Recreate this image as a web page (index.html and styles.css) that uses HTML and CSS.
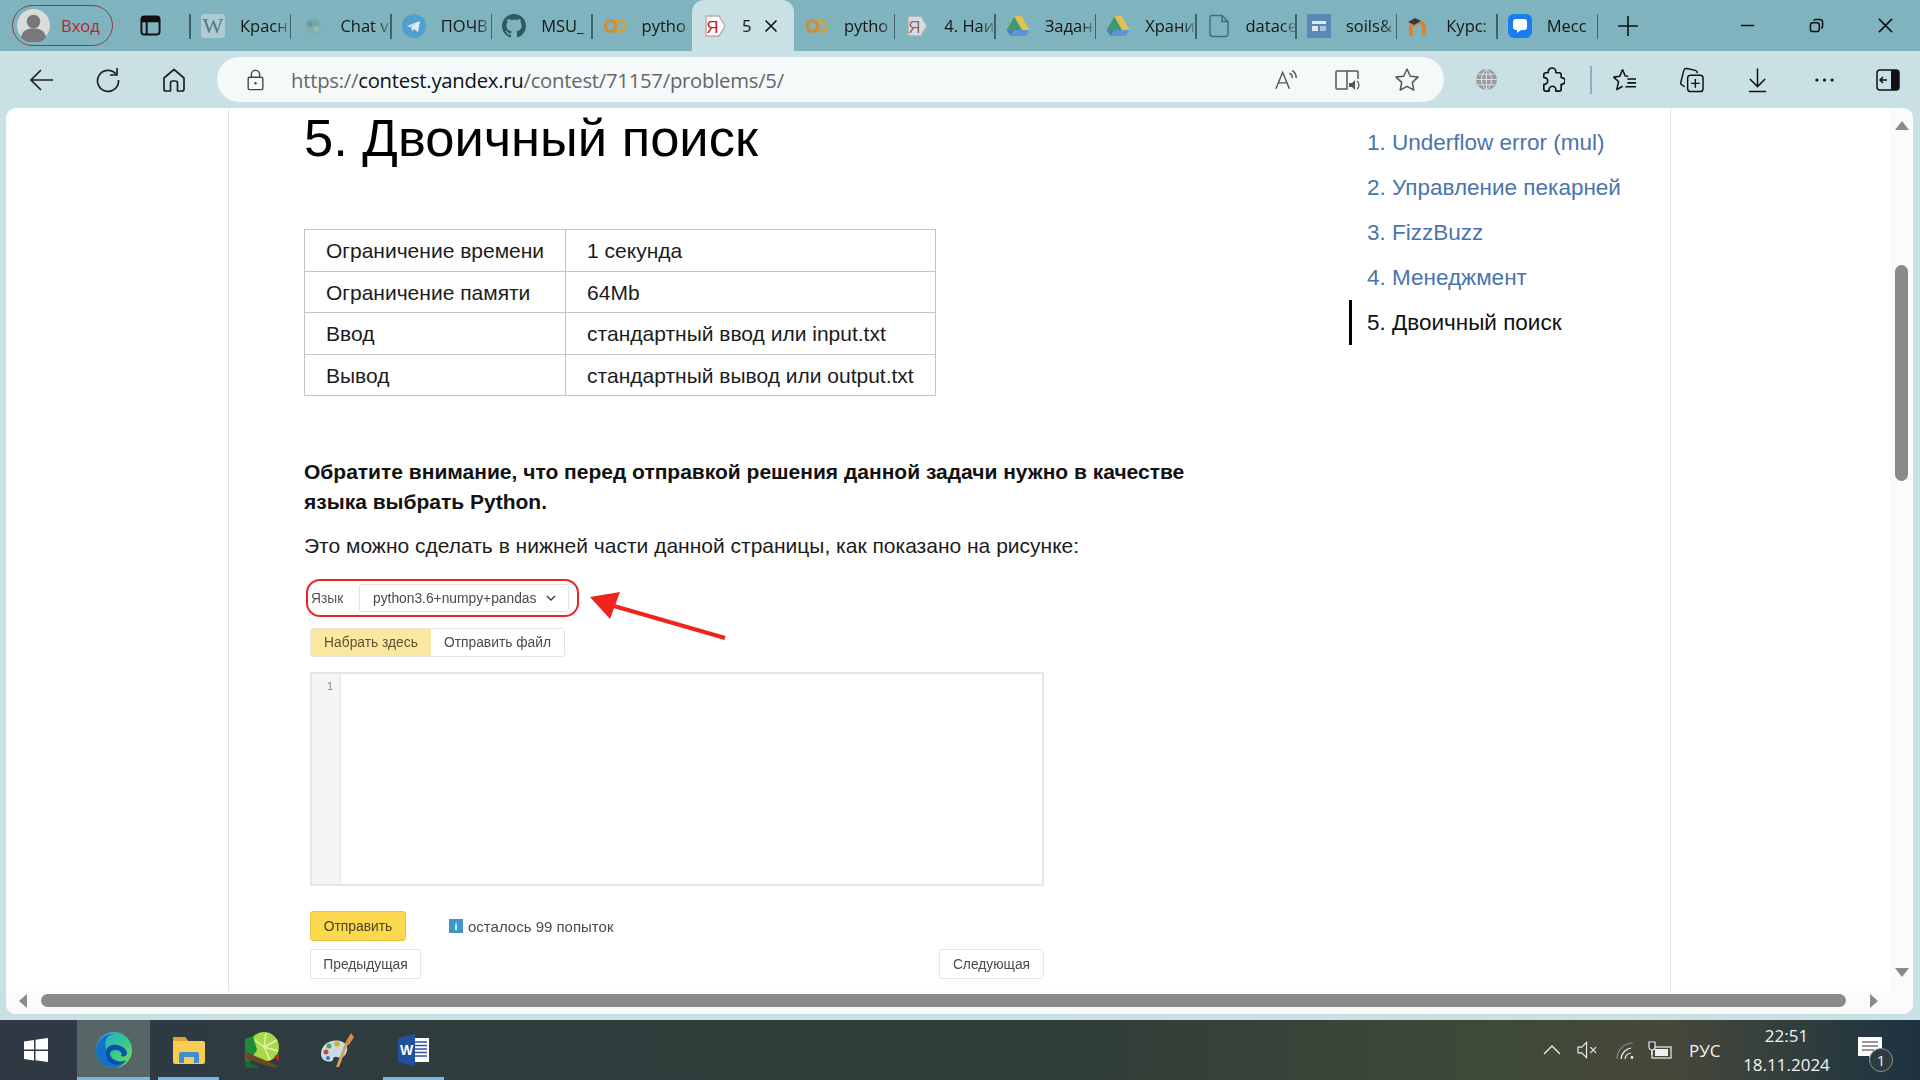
FILE: index.html
```html
<!DOCTYPE html>
<html lang="ru">
<head>
<meta charset="utf-8">
<title>5. Двоичный поиск</title>
<link rel="stylesheet" href="styles.css">
</head>
<body>
<svg class="defs" width="0" height="0" aria-hidden="true">
  <symbol id="i-ya" viewBox="0 0 24 24"><path d="M3 2h13l6 10-6 10H3z" fill="#fff" stroke="#c9a5a5" stroke-width="1.4"/><text x="9.5" y="18.5" font-family="Liberation Sans" font-size="17" text-anchor="middle" fill="#c8201c">Я</text></symbol>
  <symbol id="i-colab" viewBox="0 0 24 24"><circle cx="16.500" cy="12" r="5.300" fill="none" stroke="#c9a33f" stroke-width="3.200"/><circle cx="7.500" cy="12" r="5.300" fill="none" stroke="#c98f3a" stroke-width="3.200"/></symbol>
  <symbol id="i-drive" viewBox="0 0 24 24"><path d="M8.500 2h7l8 14h-7z" fill="#e5c04a"/><path d="M8.500 2l7.300 13H.8z" fill="#3f9a6a" transform="translate(-.2 1)"/><path d="M4.500 22l3.700-6h15.300l-3.600 6z" fill="#5a94d8"/><path d="M.5 16h7.700l-3.700 6z" fill="#4b7fb8"/></symbol>
</svg>

<header class="tabbar">
  <div class="profile">
    <svg class="avatar" viewBox="0 0 34 34"><circle cx="17" cy="17" r="17" fill="#d9dcdc"/><circle cx="17" cy="13" r="7" fill="#787878"/><path d="M4 29c2-8 8-9 13-9s11 1 13 9a17 17 0 0 1-26 0z" fill="#787878"/></svg>
    <span class="profile-name">Вход</span>
  </div>
  <svg class="tabview" viewBox="0 0 22 22"><rect x="1.500" y="1.500" width="19" height="19" rx="3" fill="none" stroke="#111" stroke-width="2"/><path d="M1.500 4.500a3 3 0 0 1 3-3h13a3 3 0 0 1 3 3v3h-19z" fill="#111"/><path d="M7 7v13" stroke="#111" stroke-width="2"/></svg>
  <div class="tabs">
    <div class="tab first"><span class="fav fav-w">W</span><span class="tab-title">Красн</span></div>
    <div class="tab"><svg class="fav dim" viewBox="0 0 24 24"><circle cx="12" cy="12" r="8" fill="#7fa9a0"/><circle cx="9" cy="10" r="3" fill="#5d8c80"/><circle cx="15" cy="15" r="3" fill="#98b9ad"/><path d="M15 5l3 6-5 1z" fill="#6c9a8e"/></svg><span class="tab-title">Chat v</span></div>
    <div class="tab"><svg class="fav" viewBox="0 0 24 24"><circle cx="12" cy="12" r="12" fill="#4f9fcf"/><path d="M5 12l13-5-2 11-4-3-2 2-1-4 6-4-7 4z" fill="#dcebf2"/></svg><span class="tab-title">ПОЧВ</span></div>
    <div class="tab"><svg class="fav" viewBox="0 0 16 16"><path fill="#2f5a62" d="M8 0C3.580 0 0 3.580 0 8c0 3.540 2.290 6.530 5.470 7.590.4.070.55-.17.55-.38 0-.19-.01-.82-.01-1.490-2.010.370-2.530-.490-2.690-.940-.090-.230-.480-.940-.820-1.130-.280-.150-.680-.520-.010-.530.630-.010 1.080.580 1.230.820.720 1.210 1.870.870 2.330.660.070-.520.280-.870.510-1.070-1.780-.200-3.640-.890-3.640-3.950 0-.870.310-1.590.820-2.150-.080-.200-.360-1.020.080-2.120 0 0 .670-.210 2.200.820.640-.180 1.320-.270 2-.270s1.360.090 2 .270c1.530-1.040 2.200-.820 2.200-.820.440 1.100.160 1.920.080 2.120.510.560.820 1.270.820 2.150 0 3.070-1.870 3.750-3.650 3.950.290.250.540.730.540 1.480 0 1.070-.010 1.930-.010 2.200 0 .210.150.460.550.380A8.010 8.010 0 0 0 16 8c0-4.420-3.580-8-8-8z"/></svg><span class="tab-title">MSU_</span></div>
    <div class="tab nosep"><svg class="fav"><use href="#i-colab"/></svg><span class="tab-title">pytho</span></div>
    <div class="tab active"><svg class="fav"><use href="#i-ya"/></svg><span class="tab-active-title">5</span><svg class="tab-close" viewBox="0 0 14 14"><path d="M1.500 1.500l11 11M12.500 1.500l-11 11" stroke="#111" stroke-width="1.600"/></svg></div>
    <div class="tab"><svg class="fav"><use href="#i-colab"/></svg><span class="tab-title">pytho</span></div>
    <div class="tab"><svg class="fav dim"><use href="#i-ya"/></svg><span class="tab-title">4. Наи</span></div>
    <div class="tab"><svg class="fav"><use href="#i-drive"/></svg><span class="tab-title">Задан</span></div>
    <div class="tab"><svg class="fav"><use href="#i-drive"/></svg><span class="tab-title">Храни</span></div>
    <div class="tab"><svg class="fav" viewBox="0 0 24 24"><path d="M4 1.500h11l6 6V20a2.500 2.500 0 0 1-2.500 2.500h-13A2.500 2.500 0 0 1 3 20V3z" fill="none" stroke="#3f6c75" stroke-width="1.400"/><path d="M15 1.500v6h6" fill="none" stroke="#3f6c75" stroke-width="1.400"/></svg><span class="tab-title">datace</span></div>
    <div class="tab"><svg class="fav" viewBox="0 0 24 24"><rect width="24" height="24" fill="#5b88b8"/><rect x="5" y="7" width="14" height="3" fill="#dfe9ee"/><rect x="5" y="12" width="6" height="5" fill="#dfe9ee"/><rect x="13" y="12" width="6" height="5" fill="#aac3d6"/></svg><span class="tab-title">soils&amp;</span></div>
    <div class="tab"><svg class="fav" viewBox="0 0 24 24"><path d="M9 22v-9a3 3 0 0 1 6 0v9h4V12a6 6 0 0 0-10-4 5 5 0 0 0-7 4v10h4V13a2 2 0 0 1 3 0z" fill="#d98334"/><path d="M1 8l7-4 6 3-7 4z" fill="#3a3a3a"/></svg><span class="tab-title">Курс:</span></div>
    <div class="tab"><svg class="fav" viewBox="0 0 24 24"><rect width="24" height="24" rx="6" fill="#1a7cf0"/><path d="M5 8a3 3 0 0 1 3-3h8a3 3 0 0 1 3 3v5a3 3 0 0 1-3 3h-3l-4 3v-3H8a3 3 0 0 1-3-3z" fill="#fff"/></svg><span class="tab-title">Месс</span></div>
  </div>
  <svg class="newtab" viewBox="0 0 20 20"><path d="M10 0v20M0 10h20" stroke="#111" stroke-width="1.600"/></svg>
  <div class="winctl">
    <svg viewBox="0 0 16 16"><path d="M1 8h14" stroke="#111" stroke-width="1.600"/></svg>
    <svg viewBox="0 0 16 16"><rect x="1.500" y="5" width="9.500" height="9.500" rx="2.500" fill="none" stroke="#111" stroke-width="1.600"/><path d="M5 3a2.500 2.500 0 0 1 2.500-1.500h4A3 3 0 0 1 14.500 4.500v4A2.500 2.500 0 0 1 13 11" fill="none" stroke="#111" stroke-width="1.600"/></svg>
    <svg viewBox="0 0 16 16"><path d="M1 1l14 14M15 1L1 15" stroke="#111" stroke-width="1.700"/></svg>
  </div>
</header>

<nav class="toolbar">
  <div class="nav-btns">
    <svg class="tb" viewBox="0 0 26 26"><path d="M24 13H2M12 3L2 13l10 10" fill="none" stroke="#222" stroke-width="1.700"/></svg>
    <svg class="tb" viewBox="0 0 26 26"><path d="M21 7a10.500 10.500 0 1 0 2.500 6" fill="none" stroke="#222" stroke-width="1.700"/><path d="M22 1v7h-7" fill="none" stroke="#222" stroke-width="1.700"/></svg>
    <svg class="tb" viewBox="0 0 26 26"><path d="M13 2.500L3 11v11a2 2 0 0 0 2 2h4.500v-8a2 2 0 0 1 2-2h3a2 2 0 0 1 2 2v8H21a2 2 0 0 0 2-2V11z" fill="none" stroke="#222" stroke-width="1.700" stroke-linejoin="round"/></svg>
  </div>
  <div class="address">
    <svg class="lock" viewBox="0 0 18 24"><path d="M4.500 9V6a4.500 4.500 0 0 1 9 0v3" fill="none" stroke="#444" stroke-width="1.500"/><rect x="1" y="9" width="16" height="13.500" rx="1.500" fill="none" stroke="#444" stroke-width="1.500"/><circle cx="9" cy="15.500" r="1.300" fill="#444"/></svg>
    <span class="url"><span class="url-dim">https://</span>contest.yandex.ru<span class="url-dim">/contest/71157/problems/5/</span></span>
    <div class="addr-icons">
      <svg class="read" viewBox="0 0 26 24"><path d="M2 21L9 4l7 17M4.500 15h9" fill="none" stroke="#555" stroke-width="1.500"/><path d="M16 5a5 5 0 0 1 3 5M19 2a9 9 0 0 1 4 8" fill="none" stroke="#555" stroke-width="1.500"/></svg>
      <svg class="imm" viewBox="0 0 26 24"><path d="M13 3H3a1 1 0 0 0-1 1v16a1 1 0 0 0 1 1h10zM13 3h10a1 1 0 0 1 1 1v7" fill="none" stroke="#555" stroke-width="1.500"/><path d="M15 15h3l3-3v10l-3-3h-3z" fill="#555"/><path d="M23 13a5 5 0 0 1 0 8" fill="none" stroke="#555" stroke-width="1.200"/></svg>
      <svg class="star" viewBox="0 0 26 26"><path d="M13 2l3.300 7.200 7.700.9-5.700 5.300 1.500 7.800L13 19.300l-6.800 3.900 1.500-7.800L2 10.100l7.700-.9z" fill="none" stroke="#555" stroke-width="1.500" stroke-linejoin="round"/></svg>
    </div>
  </div>
  <div class="tools">
    <svg class="t-globe" viewBox="0 0 24 24"><circle cx="12" cy="12" r="11" fill="#9c9c9c"/><path d="M1 12h22M3 6.500h18M3 17.500h18M12 1v22M12 1c-7 6-7 16 0 22M12 1c7 6 7 16 0 22" fill="none" stroke="#d5e5e8" stroke-width="1"/></svg>
    <svg class="t-puz" viewBox="0 0 26 27"><path d="M8.500 6V5a4 4 0 0 1 8 0v1H20a2 2 0 0 1 2 2v3h.5a3.500 3.500 0 0 1 0 7H22v5a2 2 0 0 1-2 2h-3.500v-1.500a3.500 3.500 0 0 0-7 0V25H6a2 2 0 0 1-2-2v-5h.5a3.500 3.500 0 0 0 0-7H4V8a2 2 0 0 1 2-2z" fill="none" stroke="#111" stroke-width="1.700" stroke-linejoin="round"/></svg>
    <span class="t-sep"></span>
    <svg class="t-fav" viewBox="0 0 26 26"><path d="M11 2l2.700 6.800 3.300.2M1.500 10l6.500-.8L11 2M1.500 10l5.300 4.600L5 23l6-3.500" fill="none" stroke="#111" stroke-width="1.600" stroke-linejoin="round"/><path d="M16 12h9M16 16h9M14 20h11" stroke="#111" stroke-width="1.600"/></svg>
    <svg class="t-col" viewBox="0 0 26 28"><path d="M6 21l-3-2a2 2 0 0 1-1-3L5 4a3 3 0 0 1 3-2l9 2a3 3 0 0 1 2 3" fill="none" stroke="#111" stroke-width="1.500"/><rect x="9" y="9" width="16" height="17" rx="3" fill="none" stroke="#111" stroke-width="1.500"/><path d="M17 13v9M12.500 17.500h9" stroke="#111" stroke-width="1.500"/></svg>
    <svg class="t-dl" viewBox="0 0 20 26"><path d="M10 1v19M2 12l8 8 8-8M1 25h18" fill="none" stroke="#111" stroke-width="1.600"/></svg>
    <svg class="t-dots" viewBox="0 0 20 4"><circle cx="2" cy="2" r="1.700" fill="#111"/><circle cx="10" cy="2" r="1.700" fill="#111"/><circle cx="18" cy="2" r="1.700" fill="#111"/></svg>
    <svg class="t-side" viewBox="0 0 24 22"><rect x="1" y="1" width="22" height="20" rx="3" fill="none" stroke="#111" stroke-width="1.500"/><path d="M15 1h5a3 3 0 0 1 3 3v14a3 3 0 0 1-3 3h-5z" fill="#111"/><path d="M11 11H4M7 8l-3 3 3 3" fill="none" stroke="#111" stroke-width="1.500"/></svg>
  </div>
</nav>

<div class="viewport">
  <div class="page">
    <div class="content">
      <div class="sheet">
        <main class="problem">
          <h1>5. Двоичный поиск</h1>
          <table class="limits">
            <tr><td class="c1">Ограничение времени</td><td>1 секунда</td></tr>
            <tr><td class="c1">Ограничение памяти</td><td>64Mb</td></tr>
            <tr><td class="c1">Ввод</td><td>стандартный ввод или input.txt</td></tr>
            <tr><td class="c1">Вывод</td><td>стандартный вывод или output.txt</td></tr>
          </table>
          <p class="note">Обратите внимание, что перед отправкой решения данной задачи нужно в качестве<br>языка выбрать Python.</p>
          <p class="hint">Это можно сделать в нижней части данной страницы, как показано на рисунке:</p>
          <figure class="shot">
            <div class="lang-row">
              <span class="lang-label">Язык</span>
              <div class="select"><span>python3.6+numpy+pandas</span><svg viewBox="0 0 10 6"><path d="M1 1l4 4 4-4" fill="none" stroke="#333" stroke-width="1.300"/></svg></div>
            </div>
            <svg class="arrow" viewBox="0 0 140 50"><path d="M135 46L24 14" stroke="#f0241c" stroke-width="4" fill="none"/><path d="M0 5l30-5-10 27z" fill="#f0241c"/></svg>
            <div class="seg"><span class="seg-on">Набрать здесь</span><span class="seg-off">Отправить файл</span></div>
            <div class="editor"><div class="gutter">1</div></div>
            <div class="send-row">
              <span class="btn-send">Отправить</span>
              <span class="info"><i class="info-icon">i</i>осталось 99 попыток</span>
            </div>
            <div class="pager"><span class="btn-page prev">Предыдущая</span><span class="btn-page next">Следующая</span></div>
          </figure>
        </main>
        <aside class="side">
          <a class="side-item">1. Underflow error (mul)</a>
          <a class="side-item">2. Управление пекарней</a>
          <a class="side-item">3. FizzBuzz</a>
          <a class="side-item">4. Менеджмент</a>
          <a class="side-item current">5. Двоичный поиск</a>
        </aside>
      </div>
    </div>
    <div class="vscroll">
      <span class="tri tri-up"></span>
      <span class="vtrack"><span class="vthumb"></span></span>
      <span class="tri tri-down"></span>
    </div>
    <div class="hscroll">
      <span class="tri tri-left"></span>
      <span class="hthumb"></span>
      <span class="tri tri-right"></span>
    </div>
  </div>
</div>

<footer class="taskbar">
  <div class="tb-apps">
    <div class="app start"><svg viewBox="0 0 24 24"><path d="M0 3.500l10-1.500v9.500H0zM11.500 1.800L24 0v11.500H11.500zM0 13h10v9.500L0 21zM11.500 13H24v11l-12.500-1.800z" fill="#fff"/></svg></div>
    <div class="app edge running focus"><svg viewBox="0 0 36 36"><defs><linearGradient id="eg" x1="0" y1="0" x2="1" y2="1"><stop offset="0" stop-color="#2aa8e0"/><stop offset=".55" stop-color="#36c98c"/><stop offset="1" stop-color="#7fdc5a"/></linearGradient></defs><circle cx="18" cy="18" r="18" fill="url(#eg)"/><path d="M0 18C1 8 9 1 18 2c-8 1-10 8-8 15 2 9 11 14 20 12-3 4-8 7-12 7C8 36 0 28 0 18z" fill="#1570c8"/><path d="M10 20c0-5 5-8 11-7 6 1 10 5 10 8 0 3-3 4-6 3 2-3-1-6-6-6-5 0-6 4-4 7 2 4 8 7 15 3-4 5-11 6-15 3-3-2-5-6-5-11z" fill="#0f4fa8"/></svg></div>
    <div class="app folder running"><svg viewBox="0 0 32 28"><path d="M0 3a2 2 0 0 1 2-2h10l3 4h15a2 2 0 0 1 2 2v19a2 2 0 0 1-2 2H2a2 2 0 0 1-2-2z" fill="#f7cd52"/><path d="M0 3a2 2 0 0 1 2-2h10l3 4H0z" fill="#e0a527"/><path d="M6 27v-9a2 2 0 0 1 2-2h16a2 2 0 0 1 2 2v9h-5v-6H11v6z" fill="#3f8fd0"/></svg></div>
    <div class="app lime"><svg viewBox="0 0 36 36"><circle cx="20" cy="15" r="15" fill="#a7d84a"/><path d="M20 15L8 6M20 15l2-14M20 15l13-7M20 15l14 4M20 15l6 13" stroke="#e3f3a8" stroke-width="1.500"/><path d="M1 7l8-3 4 14L1 36z" fill="#1f8a3a"/><path d="M2 20l32 14-3 2-29-9z" fill="#6a4a20"/><path d="M1 28l15 8H1z" fill="#136a2c"/><path d="M30 24l5-2v8z" fill="#b03020"/></svg></div>
    <div class="app paint"><svg viewBox="0 0 36 36"><path d="M2 22C2 12 12 7 21 9c8 2 9 9 5 14-2 3-6 3-8 2-3-1-4 1-4 3-2 3-12 2-12-6z" fill="#c9dbe6"/><circle cx="7" cy="20" r="2.500" fill="#d5443a"/><circle cx="10" cy="14" r="2.500" fill="#4ca84a"/><circle cx="18" cy="12" r="2.800" fill="#e5a53a"/><circle cx="9" cy="26" r="2" fill="#3d6fc0"/><path d="M17 35l9-24 3 1-9 23z" fill="#d9a05a"/><path d="M26 11l6-10 3 4-5 8z" fill="#d28a4c"/></svg></div>
    <div class="app word running"><svg viewBox="0 0 32 32"><rect x="13" y="4" width="18" height="24" fill="#fff"/><path d="M15 8h14M15 11.500h14M15 15h14M15 18.500h14M15 22h14" stroke="#2c55a2" stroke-width="1.300"/><path d="M0 4l17-4v32L0 28z" fill="#22509e"/><text x="8.500" y="21" font-family="Liberation Sans" font-size="14" font-weight="700" text-anchor="middle" fill="#fff">W</text></svg></div>
  </div>
  <div class="tray">
    <svg class="tr-chev" viewBox="0 0 18 10"><path d="M1 9l8-8 8 8" fill="none" stroke="#eee" stroke-width="1.300"/></svg>
    <svg class="tr-vol" viewBox="0 0 22 18"><path d="M1 6h4l5-5v16l-5-5H1z" fill="none" stroke="#eee" stroke-width="1.200"/><path d="M14 6l6 6M20 6l-6 6" stroke="#eee" stroke-width="1.200"/></svg>
    <svg class="tr-wifi" viewBox="0 0 18 18"><path d="M1 18A16 16 0 0 1 17 2" fill="none" stroke="#888" stroke-width="1.200"/><path d="M5 18A12 12 0 0 1 15 7M9 18a7 7 0 0 1 6-6" fill="none" stroke="#eee" stroke-width="1.200"/><circle cx="16" cy="16.500" r="1.400" fill="#eee"/></svg>
    <svg class="tr-bat" viewBox="0 0 24 18"><rect x="4" y="6" width="19" height="11" fill="none" stroke="#eee" stroke-width="1.200"/><rect x="7" y="8" width="13" height="7" fill="#eee"/><path d="M1 1h6v5a3 3 0 0 1-6 0zM4 9v5" fill="#2f3d38" stroke="#eee" stroke-width="1.200"/></svg>
    <span class="tr-lang">РУС</span>
    <div class="clock"><span>22:51</span><span>18.11.2024</span></div>
    <div class="notif">
      <svg viewBox="0 0 24 27"><path d="M0 0h24v19h-8l-3 6-2-6H0z" fill="#fff"/><path d="M4 5h16M4 9h16M4 13h12" stroke="#333" stroke-width="1"/></svg>
      <span class="badge">1</span>
    </div>
  </div>
</footer>
</body>
</html>
```
FILE: styles.css
```css
* { box-sizing: border-box; }
html, body { margin: 0; height: 100%; }
body {
  width: 1920px; height: 1080px; overflow: hidden;
  display: flex; flex-direction: column;
  background: #c9e0e5;
  font-family: "Liberation Sans", Arial, sans-serif;
  color: #1a1a1a;
}
.defs { position: absolute; }

/* tab strip */
.tabbar {
  flex: 0 0 51px; display: flex; align-items: center;
  background: #7fb4bf; font-family: "Open Sans", sans-serif;
}
.profile {
  margin-left: 12px; width: 101px; height: 41px;
  display: flex; align-items: center; gap: 11px; padding-left: 4px;
  border: 1.500px solid #8f3a46; border-radius: 21px;
}
.avatar { width: 33px; height: 33px; }
.profile-name { font-size: 16.500px; color: #b3282f; }
.tabview { width: 21px; height: 21px; margin-left: 27px; }
.tabs { display: flex; height: 51px; margin-left: 29px; }
.tab {
  position: relative; width: 100.400px; display: flex; align-items: center;
  padding: 0 1px 0 11px; gap: 15px;
}
.tab::after {
  content: ""; position: absolute; right: -1px; top: 14px; bottom: 12px;
  width: 1.500px; background: #3d626b;
}
.tab.first::before {
  content: ""; position: absolute; left: -1px; top: 14px; bottom: 12px;
  width: 1.500px; background: #3d626b;
}
.tab.nosep::after, .tab.active::after { display: none; }
.tab.active {
  width: 102px; background: #c9e0e5; border-radius: 12px 12px 0 0;
  gap: 15px; padding-left: 11px;
}
.fav { flex: 0 0 24px; width: 24px; height: 24px; }
.dim { opacity: .6; }
.fav-w {
  background: #a9cdd2; color: #55757c; border-radius: 3px;
  font: 22px/24px "Liberation Serif", serif; text-align: center;
}
.tab-title {
  flex: 1; min-width: 0; overflow: hidden; white-space: nowrap;
  font-size: 16.500px; color: #161616;
  -webkit-mask-image: linear-gradient(to right, #000 72%, rgba(0,0,0,.25) 100%);
  mask-image: linear-gradient(to right, #000 72%, rgba(0,0,0,.25) 100%);
}
.tab-active-title { font-size: 16.500px; color: #161616; }
.tab-close { width: 14px; height: 14px; margin-left: -2px; }
.newtab { width: 20px; height: 20px; margin-left: 21px; }
.winctl { margin-left: auto; display: flex; align-items: center; padding-right: 27px; gap: 54px; }
.winctl svg { width: 15px; height: 15px; }

/* toolbar */
.toolbar { flex: 0 0 57px; display: flex; align-items: center; padding: 6px 21px 6px 29px; background: #c9e0e5; }
.nav-btns { display: flex; gap: 40px; }
.tb { width: 26px; height: 26px; }
.address {
  margin-left: 30px; width: 1227px; height: 45px; flex: none;
  display: flex; align-items: center; padding-left: 30px;
  background: #f5f9fa; border-radius: 23px;
}
.lock { width: 17px; height: 22px; }
.url { margin-left: 27px; font: 20.300px "Open Sans", sans-serif; color: #111; letter-spacing: -.25px; }
.url-dim { color: #666; }
.addr-icons { margin-left: auto; display: flex; align-items: center; padding-right: 24px; }
.read { width: 25px; height: 24px; margin-right: 35px; }
.imm { width: 26px; height: 24px; margin-right: 34px; }
.star { width: 26px; height: 26px; }
.tools { display: flex; align-items: center; margin-left: 31px; flex: 1; }
.t-globe { width: 23px; height: 23px; }
.t-puz { width: 25px; height: 26px; margin-left: 42px; }
.t-sep { width: 1.500px; height: 28px; background: #9ab; margin-left: 25px; }
.t-fav { width: 25px; height: 26px; margin-left: 20px; }
.t-col { width: 25px; height: 28px; margin-left: 42px; }
.t-dl { width: 19px; height: 26px; margin-left: 44px; }
.t-dots { width: 19px; height: 4px; margin-left: 48px; }
.t-side { width: 24px; height: 22px; margin-left: 42px; }

/* page */
.viewport { flex: 0 0 912px; padding: 0 7px 6px 6px; }
.page {
  height: 906px; background: #fff; border-radius: 10px; overflow: hidden;
  display: grid; grid-template-columns: 1fr 23px; grid-template-rows: 1fr 23px;
}
.content { overflow: hidden; padding-left: 222px; }
.sheet {
  width: 1443px; height: 100%; display: grid; grid-template-columns: 1045px 1fr;
  padding-left: 75px; border-left: 1px solid #e4e4e4; border-right: 1px solid #e4e4e4;
}
.problem { min-width: 0; }
h1 { margin: 2px 0 63px; font-size: 52.500px; line-height: 56px; font-weight: 400; color: #000; }
.limits { border-collapse: collapse; font-size: 21px; color: #1c1c1c; }
.limits td { height: 41.500px; padding: 2px 21px 0; border: 1px solid #c4c4c4; white-space: nowrap; }
.limits .c1 { width: 261px; }
.limits td:last-child { width: 369px; }
.note { margin: 61px 0 14px; font-size: 21px; line-height: 30px; font-weight: 700; color: #111; white-space: nowrap; }
.hint { margin: 0; font-size: 21px; line-height: 30px; color: #1c1c1c; }

/* picture of the submit form */
.shot {
  position: relative; width: 734px; margin: 18px 0 0 6px;
  font-size: 13.800px; color: #4a4a4a; filter: blur(.45px);
}
.lang-row {
  width: 273px; height: 38px; margin-left: -4px;
  display: flex; align-items: center; gap: 14px; padding: 0 8px 0 3px;
  border: 2.500px solid #e8242a; border-radius: 14px;
}
.lang-label { width: 34px; color: #555; }
.select {
  flex: 1; height: 28px; display: flex; align-items: center; justify-content: space-between;
  padding: 0 12px 0 13px; border: 1px solid #e2e2e2; border-radius: 3px; color: #4a4a4a;
}
.select svg { width: 10px; height: 6px; }
.arrow { position: absolute; left: 280px; top: 13px; width: 140px; height: 50px; }
.seg { display: inline-flex; height: 29px; margin-top: 11px; border: 1px solid #e3e3e3; border-radius: 3px; vertical-align: top; }
.seg span { display: flex; align-items: center; padding: 0 8px; white-space: nowrap; }
.seg-on { width: 120px; justify-content: center; background: #fae8a0; color: #5e5230; }
.seg-off { width: 133px; justify-content: center; background: #fff; }
.editor { display: flex; height: 214px; margin-top: 15px; border: 2px solid #e6e6e6; }
.gutter { width: 29px; padding: 6px 7px 0 0; background: #f5f5f5; border-right: 1px solid #e6e6e6; text-align: right; font-size: 11px; color: #888; }
.send-row { display: flex; align-items: center; margin-top: 25px; height: 30px; }
.btn-send {
  width: 96px; height: 30px; display: flex; align-items: center; justify-content: center;
  background: #fbd84e; border: 1px solid #e8c33e; border-radius: 3px; color: #4f4316;
}
.info { display: flex; align-items: center; gap: 5px; margin-left: 43px; font-size: 15px; color: #4a4a4a; }
.info-icon { width: 14px; height: 14px; background: #3f97c8; color: #fff; font: 700 11px/14px "Liberation Serif", serif; text-align: center; }
.pager { display: flex; justify-content: space-between; margin-top: 8px; }
.btn-page { height: 30px; display: flex; align-items: center; justify-content: center; border: 1.500px solid #e6e6e6; border-radius: 3px; background: #fff; color: #4a4a4a; }
.prev { width: 111px; }
.next { width: 105px; }

/* chapter list */
.side { padding-top: 12px; display: flex; flex-direction: column; font-size: 22.500px; }
.side-item { height: 45px; padding-left: 15px; border-left: 3px solid transparent; line-height: 45px; color: #4a74ad; white-space: nowrap; }
.side-item.current { border-left-color: #000; color: #111; }

/* scrollbars */
.vscroll { grid-row: 1 / 2; grid-column: 2; display: flex; flex-direction: column; align-items: center; background: #fbfbfb; padding: 13px 0 14px 0; }
.vtrack { flex: 1; padding-top: 135px; width: 13px; display: block; }
.vthumb { display: block; width: 13px; height: 216px; background: #8a8a8a; border-radius: 7px; }
.hscroll { grid-column: 1 / 3; display: flex; align-items: center; padding: 0 35px 4px 13px; background: #fbfbfb; }
.hthumb { flex: 1; height: 13px; background: #8a8a8a; border-radius: 7px; margin: 0 24px 0 14px; }
.tri { width: 0; height: 0; display: block; }
.tri-up { border: 7.500px solid transparent; border-top: 0; border-bottom: 9px solid #8a8a8a; }
.tri-down { border: 7.500px solid transparent; border-bottom: 0; border-top: 9px solid #8a8a8a; }
.tri-left { border: 7.500px solid transparent; border-left: 0; border-right: 8px solid #8a8a8a; }
.tri-right { border: 7.500px solid transparent; border-right: 0; border-left: 8px solid #8a8a8a; }

/* taskbar */
.taskbar {
  flex: 0 0 60px; display: flex; align-items: center; color: #f2f2f2;
  background: linear-gradient(to right, #2f3945 0, #2e3d3c 25%, #2f3d38 55%, #3f4a38 78%, #47473a 87%, #2c3c3e 95%, #1d3142 100%);
  font-family: "Open Sans", sans-serif;
}
.tb-apps { display: flex; height: 60px; }
.app { position: relative; display: flex; align-items: center; justify-content: center; height: 60px; }
.start { width: 72px; margin-right: 5px; }
.start svg { width: 24px; height: 24px; }
.app.running::after { content: ""; position: absolute; left: 0; right: 0; bottom: 0; height: 3px; background: #7cb6e2; }
.edge { width: 73px; background: #566666; }
.edge svg { width: 36px; height: 36px; }
.folder { width: 61px; margin-left: 8px; }
.folder svg { width: 32px; height: 28px; }
.lime { width: 36px; margin-left: 25px; }
.lime svg { width: 36px; height: 36px; }
.paint { width: 36px; margin-left: 39px; }
.paint svg { width: 36px; height: 36px; }
.word { width: 61px; margin-left: 28px; }
.word svg { width: 32px; height: 32px; }
.tray { margin-left: auto; display: flex; align-items: center; height: 60px; position: relative; padding-right: 38px; }
.tr-chev { width: 18px; height: 10px; margin-right: 16px; }
.tr-vol { width: 21px; height: 18px; margin-right: 18px; }
.tr-wifi { width: 18px; height: 18px; margin-right: 14px; }
.tr-bat { width: 24px; height: 18px; margin-right: 17px; }
.tr-lang { font-size: 17px; margin-right: 19px; width: 34px; }
.clock { display: flex; flex-direction: column; align-items: center; width: 89px; font-size: 17px; line-height: 29px; margin-right: 27px; }
.notif { position: relative; width: 24px; height: 27px; }
.notif svg { width: 24px; height: 27px; display: block; }
.badge {
  position: absolute; left: 11px; top: 11px; width: 24px; height: 24px;
  border-radius: 50%; background: #2e3c42; border: 1px solid #8a9297;
  font: 15px/22px "Open Sans", sans-serif; text-align: center;
}
```
